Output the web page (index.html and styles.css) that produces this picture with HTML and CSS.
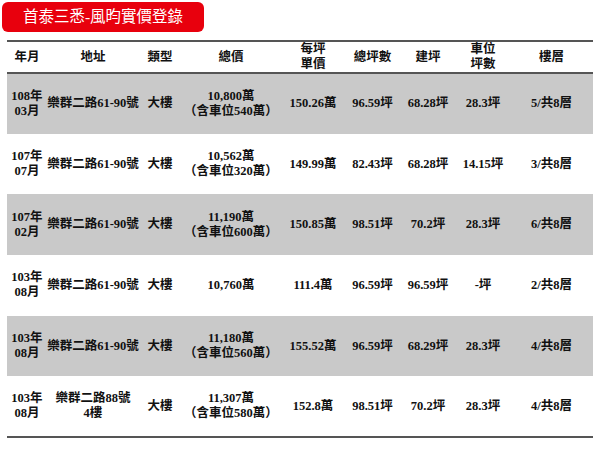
FILE: index.html
```html
<!DOCTYPE html>
<html lang="zh-Hant">
<head>
<meta charset="utf-8">
<title>首泰三悉-風昀實價登錄</title>
<link rel="stylesheet" href="styles.css">
</head>
<body>
<div class="page">
  <div class="title">首泰三悉-風昀實價登錄</div>
  <table class="deals">
    <colgroup>
      <col class="c1"><col class="c2"><col class="c3"><col class="c4"><col class="c5">
      <col class="c6"><col class="c7"><col class="c8"><col class="c9">
    </colgroup>
    <thead>
      <tr>
        <th>年月</th><th>地址</th><th>類型</th><th>總價</th><th>每坪<br>單價</th>
        <th>總坪數</th><th>建坪</th><th>車位<br>坪數</th><th>樓層</th>
      </tr>
    </thead>
    <tbody>
      <tr class="shade">
        <td>108年<br>03月</td><td>樂群二路61-90號</td><td>大樓</td><td>10,800萬<br>（含車位540萬）</td>
        <td>150.26萬</td><td>96.59坪</td><td>68.28坪</td><td>28.3坪</td><td>5/共8層</td>
      </tr>
      <tr>
        <td>107年<br>07月</td><td>樂群二路61-90號</td><td>大樓</td><td>10,562萬<br>（含車位320萬）</td>
        <td>149.99萬</td><td>82.43坪</td><td>68.28坪</td><td>14.15坪</td><td>3/共8層</td>
      </tr>
      <tr class="shade">
        <td>107年<br>02月</td><td>樂群二路61-90號</td><td>大樓</td><td>11,190萬<br>（含車位600萬）</td>
        <td>150.85萬</td><td>98.51坪</td><td>70.2坪</td><td>28.3坪</td><td>6/共8層</td>
      </tr>
      <tr>
        <td>103年<br>08月</td><td>樂群二路61-90號</td><td>大樓</td><td>10,760萬</td>
        <td>111.4萬</td><td>96.59坪</td><td>96.59坪</td><td>-坪</td><td>2/共8層</td>
      </tr>
      <tr class="shade">
        <td>103年<br>08月</td><td>樂群二路61-90號</td><td>大樓</td><td>11,180萬<br>（含車位560萬）</td>
        <td>155.52萬</td><td>96.59坪</td><td>68.29坪</td><td>28.3坪</td><td>4/共8層</td>
      </tr>
      <tr class="last">
        <td>103年<br>08月</td><td>樂群二路88號<br>4樓</td><td>大樓</td><td>11,307萬<br>（含車位580萬）</td>
        <td>152.8萬</td><td>98.51坪</td><td>70.2坪</td><td>28.3坪</td><td>4/共8層</td>
      </tr>
    </tbody>
  </table>
</div>
</body>
</html>
```
FILE: styles.css
```css
html, body {
  margin: 0;
  padding: 0;
  background: #ffffff;
}

.page {
  width: 600px;
  height: 450px;
  padding: 2px 0 0 0;
  box-sizing: border-box;
  font-family: "Liberation Serif", "Noto Sans CJK TC", serif;
  color: #111;
}

.title {
  margin-left: 2px;
  width: 202px;
  height: 30px;
  border-radius: 6px;
  background: #e8000d;
  color: #ffffff;
  font-size: 15.5px;
  line-height: 30px;
  text-align: center;
  font-family: "Liberation Serif", "Noto Sans CJK TC", serif;
}

.deals {
  margin: 8px 0 0 7px;
  width: 586px;
  border-collapse: collapse;
  table-layout: fixed;
  font-size: 12.5px;
  line-height: 15px;
  font-weight: 700;
}

.c1 { width: 40px; }
.c2 { width: 92px; }
.c3 { width: 42px; }
.c4 { width: 100px; }
.c5 { width: 64px; }
.c6 { width: 55px; }
.c7 { width: 56px; }
.c8 { width: 54px; }
.c9 { width: 83px; }

.deals th,
.deals td {
  padding: 0;
  text-align: center;
  vertical-align: middle;
  white-space: nowrap;
}

.deals thead tr {
  height: 31px;
  border-top: 2px solid #555;
  border-bottom: 2px solid #555;
}

.deals tbody tr {
  height: 60.7px;
}

.deals tbody tr.shade {
  background: #c9c9c9;
}

.deals tbody tr.last {
  border-bottom: 2px solid #555;
}
```
